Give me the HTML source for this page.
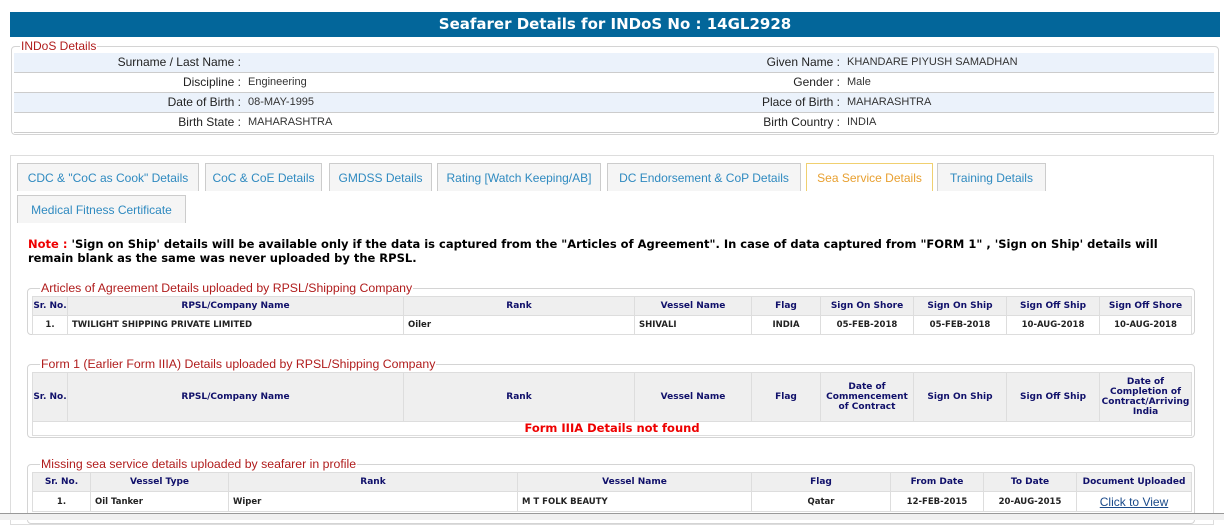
<!DOCTYPE html>
<html><head><meta charset="utf-8"><style>
*{margin:0;padding:0;box-sizing:border-box}
body{width:1224px;height:520px;overflow:hidden;background:#fff;position:relative;font-family:"Liberation Sans",Arial,sans-serif}
.a{position:absolute}
.bar{left:10px;top:12px;width:1210px;height:25px;background:#03669a;color:#fff;font:bold 15px "DejaVu Sans",sans-serif;text-align:center;line-height:25px}
.fs{border:1px solid #d4d4d4;border-radius:4px}
.lg{background:#fff;color:#b01c1c;font-size:12.3px;padding:0 1px;line-height:13px}
.row{left:14px;width:1200px;height:20px;border-bottom:1px solid #ccc;font-size:11px;color:#333;line-height:19px}
.row.b{background:#ebf2fb}
.row span{position:absolute}
.row span.k{font-size:12px;color:#222}
.tab{top:163px;height:28px;border:1px solid #ccc;border-bottom:none;background:#f5f5f5;color:#2f8ac0;font-size:12px;line-height:28px;text-align:center;white-space:nowrap}
table{position:absolute;border-collapse:collapse;font-family:"DejaVu Sans",Verdana,sans-serif;font-size:8.5px;font-weight:bold}
th{background:#efefef;color:#10106a;border:1px solid #ddd;font-weight:bold;text-align:center;padding:0;font-size:9px}
td{border:1px solid #ddd;color:#222;padding:0 4px;text-align:left}
td.c{text-align:center}
</style></head><body>
<div class="a bar">Seafarer Details for INDoS No : 14GL2928</div>

<div class="a fs" style="left:11px;top:46px;width:1208px;height:89px"></div>
<div class="a lg" style="left:20px;top:40px;font-size:12px">INDoS Details</div>
<div class="a row b" style="top:53px"><span class="k" style="left:0;width:227px;text-align:right">Surname / Last Name :</span><span class="k" style="left:0;width:826px;text-align:right">Given Name :</span><span style="left:833px">KHANDARE PIYUSH SAMADHAN</span></div>
<div class="a row" style="top:73px"><span class="k" style="left:0;width:227px;text-align:right">Discipline :</span><span style="left:234px">Engineering</span><span class="k" style="left:0;width:826px;text-align:right">Gender :</span><span style="left:833px">Male</span></div>
<div class="a row b" style="top:93px"><span class="k" style="left:0;width:227px;text-align:right">Date of Birth :</span><span style="left:234px">08-MAY-1995</span><span class="k" style="left:0;width:826px;text-align:right">Place of Birth :</span><span style="left:833px">MAHARASHTRA</span></div>
<div class="a row" style="top:113px"><span class="k" style="left:0;width:227px;text-align:right">Birth State :</span><span style="left:234px">MAHARASHTRA</span><span class="k" style="left:0;width:826px;text-align:right">Birth Country :</span><span style="left:833px">INDIA</span></div>

<div class="a" style="left:10px;top:155px;width:1204px;height:370px;border:1px solid #ddd"></div>
<div class="a tab" style="left:17px;width:182px">CDC &amp; "CoC as Cook" Details</div>
<div class="a tab" style="left:205px;width:117px">CoC &amp; CoE Details</div>
<div class="a tab" style="left:329px;width:103px">GMDSS Details</div>
<div class="a tab" style="left:437px;width:164px">Rating [Watch Keeping/AB]</div>
<div class="a tab" style="left:607px;width:194px">DC Endorsement &amp; CoP Details</div>
<div class="a tab" style="left:806px;width:127px;background:#fff;border-color:#f0d070;color:#e8a030">Sea Service Details</div>
<div class="a tab" style="left:937px;width:109px">Training Details</div>
<div class="a tab" style="left:17px;top:195px;width:169px">Medical Fitness Certificate</div>

<div class="a" style="left:28px;top:237px;width:1172px;font:bold 11.5px 'DejaVu Sans',Verdana,sans-serif;line-height:14px;color:#000"><span style="color:#e00">Note :</span> 'Sign on Ship' details will be available only if the data is captured from the "Articles of Agreement". In case of data captured from "FORM 1" , 'Sign on Ship' details will remain blank as the same was never uploaded by the RPSL.</div>

<div class="a fs" style="left:27px;top:288px;width:1168px;height:47px"></div>
<div class="a lg" style="left:40px;top:282px">Articles of Agreement Details uploaded by RPSL/Shipping Company</div>
<table style="left:32px;top:296px;width:1160px">
<tr style="height:19px"><th style="width:35px">Sr. No.</th><th style="width:336px">RPSL/Company Name</th><th style="width:231px">Rank</th><th style="width:117px">Vessel Name</th><th style="width:69px">Flag</th><th style="width:93px">Sign On Shore</th><th style="width:93px">Sign On Ship</th><th style="width:93px">Sign Off Ship</th><th>Sign Off Shore</th></tr>
<tr style="height:19px"><td class="c">1.</td><td>TWILIGHT SHIPPING PRIVATE LIMITED</td><td>Oiler</td><td>SHIVALI</td><td class="c">INDIA</td><td class="c">05-FEB-2018</td><td class="c">05-FEB-2018</td><td class="c">10-AUG-2018</td><td class="c">10-AUG-2018</td></tr>
</table>

<div class="a fs" style="left:27px;top:364px;width:1168px;height:74px"></div>
<div class="a lg" style="left:40px;top:358px">Form 1 (Earlier Form IIIA) Details uploaded by RPSL/Shipping Company</div>
<table style="left:32px;top:372px;width:1160px">
<tr style="height:49px"><th style="width:35px">Sr. No.</th><th style="width:336px">RPSL/Company Name</th><th style="width:231px">Rank</th><th style="width:117px">Vessel Name</th><th style="width:69px">Flag</th><th style="width:93px">Date of<br>Commencement<br>of Contract</th><th style="width:93px">Sign On Ship</th><th style="width:93px">Sign Off Ship</th><th>Date of<br>Completion of<br>Contract/Arriving<br>India</th></tr>
<tr style="height:14px"><td colspan="9" class="c" style="color:#e00;font-size:11.5px;line-height:13px">Form IIIA Details not found</td></tr>
</table>

<div class="a fs" style="left:27px;top:464px;width:1168px;height:60px"></div>
<div class="a lg" style="left:40px;top:458px">Missing sea service details uploaded by seafarer in profile</div>
<table style="left:32px;top:472px;width:1160px">
<tr style="height:19px"><th style="width:58px">Sr. No.</th><th style="width:138px">Vessel Type</th><th style="width:289px">Rank</th><th style="width:234px">Vessel Name</th><th style="width:139px">Flag</th><th style="width:93px">From Date</th><th style="width:93px">To Date</th><th>Document Uploaded</th></tr>
<tr style="height:20px"><td class="c">1.</td><td>Oil Tanker</td><td>Wiper</td><td>M T FOLK BEAUTY</td><td class="c">Qatar</td><td class="c">12-FEB-2015</td><td class="c">20-AUG-2015</td><td class="c"><span style="font:12px 'Liberation Sans',Arial,sans-serif;color:#1a4a8a;text-decoration:underline">Click to View</span></td></tr>
</table>
<div class="a" style="left:0;top:513px;width:1224px;height:7px;background:#f0f0f0;border-top:1px solid #999"></div>
</body></html>
